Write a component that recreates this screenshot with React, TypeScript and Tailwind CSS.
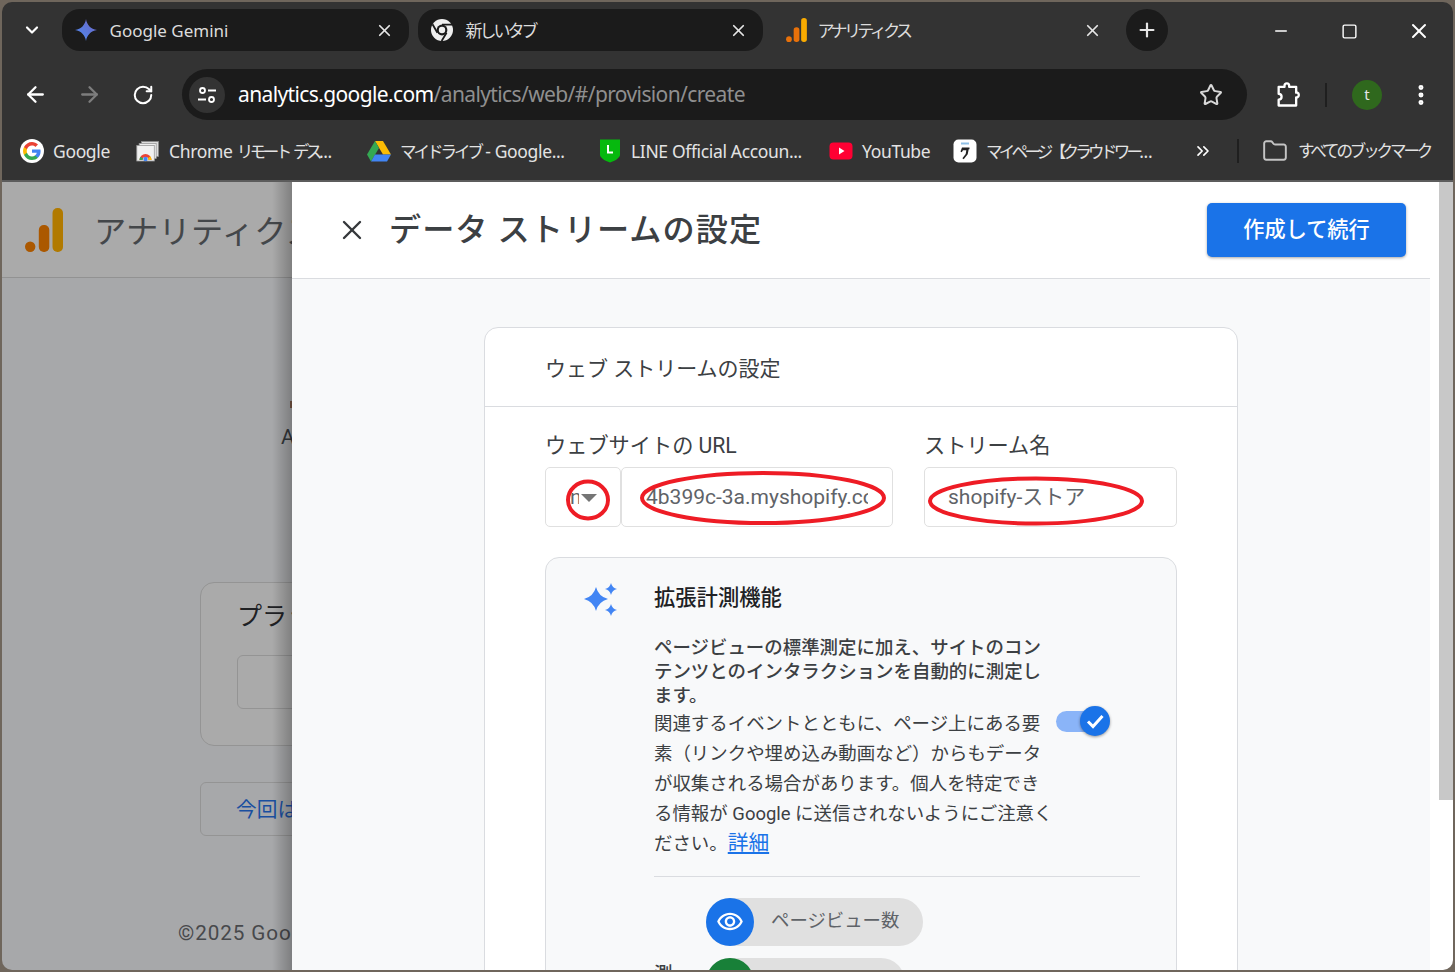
import { FC, ReactNode } from "react";
import {
  ArrowLeft,
  ArrowRight,
  ChevronDown,
  ChevronsRight,
  EllipsisVertical,
  Folder,
  Minus,
  Plus,
  RotateCw,
  Square,
  Star,
  X,
} from "lucide-react";

const chromeFont = "font-['Noto_Sans','Noto_Sans_CJK_JP',sans-serif]";
const pageFont = "font-['Roboto','Noto_Sans_CJK_JP',sans-serif]";

// Japanese runs in the browser UI are set much narrower than Noto's full width.
const Narrow: FC<{ children: ReactNode; className?: string }> = ({
  children,
  className = "text-[16.500px] tracking-[-3px]",
}) => <span className={className}>{children}</span>;

const GeminiIcon = () => (
  <svg viewBox="0 0 24 24" className="w-6 h-6">
    <defs>
      <linearGradient id="gem" x1="0" y1="1" x2="1" y2="0">
        <stop offset="0" stopColor="#4e8df5" />
        <stop offset="0.6" stopColor="#5f74d6" />
        <stop offset="1" stopColor="#7f68c8" />
      </linearGradient>
    </defs>
    <path
      d="M12 1c.9 6 4.8 10 11 11-6.200 1-10.100 5-11 11-.9-6-4.800-10-11-11 6.200-1 10.100-5 11-11z"
      fill="url(#gem)"
    />
  </svg>
);

const ChromeLogo = () => (
  <svg viewBox="0 0 24 24" className="w-6 h-6">
    <circle cx="12" cy="12" r="11" fill="#eeeeee" />
    <path d="M12 6.700h10M7.400 14.700 2.500 6.200M16.600 14.700 11.600 23" stroke="#1b1b1b" strokeWidth="1.800" fill="none" />
    <circle cx="12" cy="12" r="5.400" fill="#1b1b1b" />
    <circle cx="12" cy="12" r="3.200" fill="#eeeeee" />
  </svg>
);

const AnalyticsLogo: FC<{ className: string; a?: string; b?: string; c?: string }> = ({
  className,
  a = "#e8710a",
  b = "#e8710a",
  c = "#f9ab00",
}) => (
  <svg viewBox="0 0 38 44" className={`shrink-0 ${className}`}>
    <rect x="27.500" y="0" width="10.500" height="44" rx="5" fill={c} />
    <rect x="13.800" y="17" width="10.500" height="27" rx="5" fill={b} />
    <circle cx="5.200" cy="38.800" r="5.200" fill={a} />
  </svg>
);

const GoogleG = () => (
  <svg viewBox="0 0 24 24" className="w-6 h-6">
    <circle cx="12" cy="12" r="12" fill="#fff" />
    <path d="M20.600 12.200c0-.6-.1-1.200-.2-1.800H12v3.400h4.800c-.2 1.100-.8 2-1.800 2.700v2.200h2.900c1.700-1.600 2.700-3.800 2.700-6.500z" fill="#4285f4" />
    <path d="M12 21c2.400 0 4.500-.8 5.900-2.200L15 16.500c-.8.500-1.800.9-3 .9-2.300 0-4.300-1.600-5-3.700H4v2.300C5.500 19 8.500 21 12 21z" fill="#34a853" />
    <path d="M7 13.700c-.4-1.100-.4-2.300 0-3.400V8H4c-1.300 2.500-1.300 5.500 0 8l3-2.300z" fill="#fbbc05" />
    <path d="M12 6.600c1.300 0 2.500.5 3.400 1.300L18 5.400C16.400 3.900 14.300 3 12 3 8.500 3 5.500 5 4 8l3 2.300c.7-2.100 2.700-3.700 5-3.700z" fill="#ea4335" />
  </svg>
);

const RemoteDesktopIcon = () => (
  <svg viewBox="0 0 24 24" className="w-6 h-6">
    <rect x="5.500" y="2.500" width="17" height="15" fill="#dddddd" stroke="#8a8a8a" strokeWidth="0.8" />
    <rect x="3.200" y="4.500" width="17" height="15" fill="#eeeeee" stroke="#9a9a9a" strokeWidth="0.8" />
    <rect x="0.800" y="6.500" width="17.500" height="15.500" fill="#f1f1f1" stroke="#9a9a9a" strokeWidth="0.8" />
    <path d="M3.500 21a6 6 0 0 1 12 0h-3a3 3 0 0 0-6 0z" fill="#ea4335" />
    <path d="M3.500 21a6 6 0 0 1 1-3.300l2.600 1.700-.6 1.600z" fill="#34a853" />
    <path d="M15.500 21a6 6 0 0 0-1.300-3.700l-2.200 2 .5 1.700z" fill="#fbbc05" />
    <circle cx="9.500" cy="20" r="2.200" fill="#4285f4" />
  </svg>
);

const DriveIcon = () => (
  <svg viewBox="0 0 24 22" className="w-6 h-6">
    <path d="M8 1h8l8 13.500h-8z" fill="#fbbc05" />
    <path d="M8 1 0 14.500l4 7 8-13.500z" fill="#34a853" />
    <path d="M8 14.500h16l-4 7H4z" fill="#4285f4" />
  </svg>
);

const LineIcon = () => (
  <svg viewBox="0 0 24 24" className="w-6 h-6">
    <path d="M2 0.500h20v15.500c0 2.500-5 6-10 7.500-5-1.500-10-5-10-7.500z" fill="#06b90e" />
    <path d="M10 6v7.500h5" stroke="#fff" strokeWidth="2" fill="none" />
  </svg>
);

const YoutubeIcon = () => (
  <svg viewBox="0 0 24 24" className="w-6 h-6">
    <rect x="0.500" y="3.500" width="23" height="17" rx="4" fill="#ff0033" />
    <path d="M10 8.500 15.500 12 10 15.500z" fill="#fff" />
  </svg>
);

const CrowdWorksIcon = () => (
  <svg viewBox="0 0 24 24" className="w-6 h-6">
    <rect x="0.500" y="0.500" width="23" height="23" rx="5" fill="#fff" />
    <path d="M9 8.500h7.500v1.800h-.8l-1 5-4 5-1.300-1 3.300-4.300.6-3.800H10l-1.200 2-1.300-.8z" fill="#222" />
    <path d="M8 3.500h8v2H8z" fill="#8fc0e6" />
  </svg>
);

const Tab: FC<{ icon: ReactNode; label: ReactNode; width: string; pill?: boolean }> = ({
  icon,
  label,
  width,
  pill,
}) => (
  <div
    className={`flex items-center h-[42px] pl-[12px] pr-[15px] rounded-[18px] ${width} ${
      pill ? "bg-[#1b1b1b]" : ""
    }`}
  >
    <span className="w-6 h-6 flex items-center justify-center">{icon}</span>
    <span className="ml-[11.500px] mt-[1px] text-[17px] text-[#dcdcdc]">{label}</span>
    <X className="ml-auto w-[19px] h-[19px] text-[#e6e6e6]" strokeWidth={2.2} />
  </div>
);

const Bookmark: FC<{ icon: ReactNode; label: ReactNode; width: string }> = ({ icon, label, width }) => (
  <div className={`flex items-center shrink-0 ${width}`}>
    <span className="w-6 h-6 shrink-0">{icon}</span>
    <span className="ml-[9px] text-[17.500px] text-[#e3e3e3] tracking-[-0.35px] whitespace-nowrap">{label}</span>
  </div>
);

const BrowserChrome = () => (
  <header className={`shrink-0 bg-[#333333] h-[180px] border-b-2 border-[#5c5c5c] ${chromeFont}`}>
    {/* tabs */}
    <div className="flex items-center pt-[7px]">
      <div className="w-[60px] flex justify-center">
        <ChevronDown className="w-[20px] h-[20px] text-white" strokeWidth={2.6} />
      </div>
      <div className="flex items-center gap-[9px]">
        <Tab icon={<GeminiIcon />} label="Google Gemini" width="w-[347px]" pill />
        <Tab
          icon={<ChromeLogo />}
          label={<Narrow className="tracking-[-3px]">新しいタブ</Narrow>}
          width="w-[345px]"
          pill
        />
        <Tab
          icon={<AnalyticsLogo className="w-[21px] h-[24px]" />}
          label={<Narrow className="-ml-[2px] tracking-[-3.600px]">アナリティクス</Narrow>}
          width="w-[345px]"
        />
      </div>
      <div className="ml-[9px] w-[42px] h-[42px] rounded-full bg-[#1b1b1b] flex items-center justify-center">
        <Plus className="w-[22px] h-[22px] text-[#e6e6e6]" strokeWidth={2.4} />
      </div>
      <div className="ml-auto mt-[2px] flex items-center">
        <div className="w-[69px] flex justify-center">
          <Minus className="w-[18px] h-[18px] text-white" strokeWidth={2} />
        </div>
        <div className="w-[69px] flex justify-center">
          <Square className="w-[17px] h-[17px] text-white" strokeWidth={2} />
        </div>
        <div className="w-[69px] flex justify-center">
          <X className="w-[24px] h-[24px] text-white" strokeWidth={2} />
        </div>
      </div>
    </div>
    {/* toolbar */}
    <div className="flex items-center mt-[18px] pl-[6px]">
      <div className="w-[54px] flex justify-center">
        <ArrowLeft className="w-[25px] h-[25px] text-white" strokeWidth={2.2} />
      </div>
      <div className="w-[54px] flex justify-center">
        <ArrowRight className="w-[25px] h-[25px] text-[#7d7d7d]" strokeWidth={2.2} />
      </div>
      <div className="w-[54px] flex justify-center">
        <RotateCw className="w-[22px] h-[22px] text-white" strokeWidth={2.2} />
      </div>
      <div className="ml-[12px] w-[1065px] h-[51px] rounded-full bg-[#1b1b1b] flex items-center pl-[7px] pr-[24px]">
        <div className="w-[36px] h-[36px] rounded-full bg-[#333333] flex items-center justify-center">
          <svg viewBox="0 0 24 24" className="w-[24px] h-[24px]" fill="none" stroke="#fff" strokeWidth="1.800">
            <circle cx="7.500" cy="7.500" r="2.500" />
            <path d="M13 7.500h8M3 16.500h8" />
            <circle cx="16.500" cy="16.500" r="2.500" />
          </svg>
        </div>
        <div className="ml-[13px] text-[21px] tracking-[-0.62px] whitespace-nowrap">
          <span className="text-white">analytics.google.com</span>
          <span className="text-[#8f8f8f]">/analytics/web/#/provision/create</span>
        </div>
        <Star className="ml-auto w-[24px] h-[24px] text-[#d8d8d8]" strokeWidth={2} />
      </div>
      <div className="ml-[26px] w-[30px] flex justify-center">
        <svg viewBox="0 0 24 24" className="w-[28px] h-[28px]" fill="none" stroke="#fff" strokeWidth="2" strokeLinejoin="round">
          <path d="M4 5h5V4a2 2 0 0 1 4 0v1h6v5h1a2.200 2.200 0 0 1 0 4h-1v7H4v-5a2.500 2.500 0 0 0 0-5V5z" />
        </svg>
      </div>
      <div className="ml-[22px] w-[2px] h-[24px] bg-[#1f1f1f]" />
      <div className="ml-[25px] w-[30px] h-[30px] rounded-full bg-[#2f681d] flex items-center justify-center text-[15px] text-[#e6e6e6]">
        t
      </div>
      <EllipsisVertical className="ml-[26px] w-[26px] h-[26px] text-white" strokeWidth={2.6} />
    </div>
    {/* bookmarks */}
    <div className="flex items-center mt-[11px] h-[40px] pl-[18px]">
      <Bookmark icon={<GoogleG />} label="Google" width="w-[116px]" />
      <Bookmark
        icon={<RemoteDesktopIcon />}
        label={
          <>
            Chrome <Narrow className="text-[16.500px] tracking-[-3.500px]">リモート</Narrow>{" "}
            <Narrow className="text-[16.500px] tracking-[-3.500px]">デス</Narrow>...
          </>
        }
        width="w-[231px]"
      />
      <Bookmark
        icon={<DriveIcon />}
        label={
          <>
            <Narrow>マイドライブ</Narrow> - Google...
          </>
        }
        width="w-[231px]"
      />
      <Bookmark icon={<LineIcon />} label="LINE Official Accoun..." width="w-[231px]" />
      <Bookmark icon={<YoutubeIcon />} label="YouTube" width="w-[124px]" />
      <Bookmark
        icon={<CrowdWorksIcon />}
        label={
          <>
            <Narrow className="text-[16.500px] tracking-[-3.700px]">マイページ【クラウドワー</Narrow>...
          </>
        }
        width="w-[240px]"
      />
      <ChevronsRight className="w-[20px] h-[20px] text-white shrink-0" strokeWidth={2} />
      <div className="ml-[24px] w-[2px] h-[24px] bg-[#1f1f1f] shrink-0" />
      <Folder className="ml-[23px] w-[26px] h-[26px] text-[#c4c4c4] shrink-0" strokeWidth={1.800} />
      <span className="ml-[10px] text-[#e3e3e3] whitespace-nowrap">
        <Narrow className="text-[16.500px] tracking-[-3.100px]">すべてのブックマーク</Narrow>
      </span>
    </div>
  </header>
);

const BackgroundPage = () => (
  <div className="relative shrink-0 w-[290px] overflow-hidden bg-[#a7a8aa]">
    <div className="h-[96px] bg-[#aaaaaa] border-b border-[#929292] flex items-center pl-[23px] whitespace-nowrap">
      <AnalyticsLogo className="w-[38px] h-[44px]" a="#ab5800" b="#ab5800" c="#b17a00" />
      <span className="ml-[31px] pt-[5px] text-[32.200px] text-[#44474a] tracking-[0.4px]">アナリティクス</span>
    </div>
    <div className="pl-[279px] pt-[147px] text-[20.700px] leading-[24px] text-[#35383c] whitespace-nowrap">
      Account
    </div>
    <div className="ml-[198px] mt-[133px] w-[500px] h-[164px] rounded-[14px] border border-[#949494] bg-[#aaaaaa] pl-[36px] pt-[16px]">
      <div className="text-[25px] leading-[36px] text-[#202124] whitespace-nowrap">プラットフォーム</div>
      <div className="mt-[20px] h-[54px] rounded-[6px] border border-[#949494]" />
    </div>
    <div className="ml-[198px] mt-[36px] w-[500px] h-[54px] rounded-[6px] border border-[#949494] flex items-center pl-[35px] pt-[3px] text-[20.700px] text-[#1a4fa0] whitespace-nowrap">
      今回はスキップ
    </div>
    <div className="ml-[176px] mt-[83px] text-[20.700px] tracking-[0.9px] leading-[28px] text-[#47494c] whitespace-nowrap">
      ©2025 Google
    </div>
    <div className="absolute right-0 top-[219px] w-[2px] h-[7px] bg-[#7a5a48]" />
    <div className="absolute inset-y-0 right-0 w-[20px] bg-gradient-to-r from-transparent to-black/25" />
  </div>
);

const Field: FC<{ children: ReactNode; className: string }> = ({ children, className }) => (
  <div className={`h-[60px] pt-[2px] rounded-[5px] border border-[#e0e0e0] bg-white flex items-center overflow-hidden text-[21px] text-[#5f6368] whitespace-nowrap ${className}`}>
    {children}
  </div>
);

const Chip: FC<{ width: string; bg: string; label: string; icon?: ReactNode }> = ({ width, bg, label, icon }) => (
  <div className={`flex items-center h-[48px] rounded-full bg-[#e0e0e0] ${width}`}>
    <div className={`w-[48px] h-[48px] rounded-full flex items-center justify-center ${bg}`}>{icon}</div>
    <span className="ml-[17px] -mt-[3px] text-[18.400px] text-[#5f6368]">{label}</span>
  </div>
);

const EnhancedMeasurement = () => (
  <div className="relative mx-[60px] mt-[30px] flex rounded-t-[14px] border border-[#dadce0] bg-[#f8f9fa] pl-[36px] pt-[25px] pb-[40px] overflow-hidden">
    <svg viewBox="0 0 36 36" className="w-[36px] h-[36px] shrink-0 text-[#4285f4]" fill="currentColor">
      <path d="M14 4Q16.500 13.500 26 16 16.500 18.500 14 28 11.500 18.500 2 16 11.500 13.500 14 4z" />
      <path d="M29 0Q30.200 4.800 35 6 30.200 7.200 29 12 27.800 7.200 23 6 27.800 4.800 29 0z" />
      <path d="M29 21Q30.200 25.800 35 27 30.200 28.200 29 33 27.800 28.200 23 27 27.800 25.800 29 21z" />
    </svg>
    <div className="ml-[36px] w-[486px]">
      <h3 className="mt-[1px] text-[21.300px] leading-[28px] font-medium text-[#202124]">拡張計測機能</h3>
      <p className="mt-[24px] text-[18.450px] leading-[24px] font-medium text-[#3c4043] whitespace-nowrap">
        ページビューの標準測定に加え、サイトのコン
        <br />
        テンツとのインタラクションを自動的に測定し
        <br />
        ます。
      </p>
      <div className="relative mt-[1px]">
        <p className="text-[18.450px] leading-[30px] text-[#3c4043] whitespace-nowrap">
          関連するイベントとともに、ページ上にある要
          <br />
          素（リンクや埋め込み動画など）からもデータ
          <br />
          が収集される場合があります。個人を特定でき
          <br />
          る情報が Google に送信されないようにご注意く
          <br />
          ださい。
          <span className="text-[20.700px] leading-none text-[#1a73e8] underline">詳細</span>
        </p>
        <div className="absolute left-[402px] top-[2px] w-[44px] h-[21px] rounded-full bg-[#8ab4f8]" />
        <div className="absolute left-[426px] top-[-3px] w-[30px] h-[30px] rounded-full bg-[#1a73e8] shadow-[0_1px_3px_rgba(0,0,0,0.4)] flex items-center justify-center">
          <svg viewBox="0 0 24 24" className="w-[24px] h-[24px]" fill="none" stroke="#fff" strokeWidth="3">
            <path d="M5 12.500 10 17.500 19.500 7" />
          </svg>
        </div>
      </div>
      <div className="mt-[17px] border-t border-[#dadce0]" />
      <div className="mt-[21px] pl-[52px] flex flex-col gap-[12px]">
        <Chip
          width="w-[217px]"
          bg="bg-[#1a73e8]"
          label="ページビュー数"
          icon={
            <svg viewBox="0 0 24 24" className="w-[28px] h-[28px]" fill="#fff">
              <path d="M12 6c3.790 0 7.170 2.130 8.820 5.500C19.170 14.870 15.790 17 12 17s-7.170-2.130-8.820-5.500C4.830 8.130 8.210 6 12 6m0-2C7 4 2.730 7.110 1 11.500 2.730 15.890 7 19 12 19s9.270-3.110 11-7.500C21.270 7.110 17 4 12 4zm0 5c1.380 0 2.500 1.120 2.500 2.500S13.380 14 12 14s-2.500-1.120-2.500-2.500S10.620 9 12 9m0-2c-2.480 0-4.500 2.020-4.500 4.500S9.520 16 12 16s4.500-2.020 4.500-4.500S14.480 7 12 7z" />
            </svg>
          }
        />
        <Chip width="w-[199px]" bg="bg-[#188038]" label="スクロール数" />
      </div>
      <div className="absolute left-[108px] top-[404px] text-[18.450px] leading-[24px] font-medium text-[#3c4043]">測</div>
    </div>
  </div>
);

const StreamCard = () => (
  <div className="mx-[192px] mt-[48px] rounded-t-[14px] border border-[#dadce0] bg-white">
    <div className="h-[79px] border-b border-[#dadce0] flex items-center pl-[60px] pt-[6px] text-[21px] text-[#3c4043]">
      ウェブ ストリームの設定
    </div>
    <div className="px-[60px] pt-[24px] flex gap-[31px]">
      <div>
        <label className="block text-[21.200px] leading-[30px] text-[#3c4043]">ウェブサイトの URL</label>
        <div className="mt-[6px] flex">
          <Field className="w-[76px] pl-[24px]">
            <span className="w-[9px] overflow-hidden">n</span>
            <span className="ml-[2px] w-0 h-0 border-x-[8px] border-t-[8px] border-x-transparent border-t-[#757575]" />
          </Field>
          <Field className="w-[272px] px-[24px]">
            <span className="overflow-hidden">4b399c-3a.myshopify.com</span>
          </Field>
        </div>
      </div>
      <div className="flex-1">
        <label className="block text-[21.200px] leading-[30px] text-[#3c4043]">ストリーム名</label>
        <Field className="mt-[6px] px-[23px]">shopify-ストア</Field>
      </div>
    </div>
    <EnhancedMeasurement />
  </div>
);

const Modal = () => (
  <div className="relative flex-1 flex bg-white overflow-hidden">
    <div className="w-[1138px] shrink-0 bg-[#f8f9fa] overflow-hidden">
      <div className="h-[97px] bg-white border-b border-[#dadce0] flex items-center pl-[44px]">
        <X className="w-[32px] h-[32px] text-[#35383c] shrink-0" strokeWidth={1.800} />
        <h1 className="ml-[21px] text-[32.200px] tracking-[1px] font-medium text-[#3c4043] whitespace-nowrap">データ ストリームの設定</h1>
        <button className="ml-auto mr-[24px] w-[199px] h-[54px] rounded-[5px] bg-[#1a73e8] shadow-[0_1px_3px_rgba(0,0,0,0.35)] text-[21.200px] font-medium text-white">
          作成して続行
        </button>
      </div>
      <StreamCard />
    </div>
    <div className="ml-auto w-[14px] self-start h-[618px] bg-[#c8c8c8]" />
    {/* red marks drawn over the screenshot */}
    <svg className="absolute left-0 top-0 w-[1161px] h-[788px] pointer-events-none" viewBox="0 0 1161 788" fill="none" stroke="#ee1c25" strokeWidth="4">
      <ellipse cx="296" cy="318" rx="20" ry="18.500" />
      <ellipse cx="471" cy="316" rx="121" ry="25" />
      <ellipse cx="744" cy="319" rx="106" ry="22.500" />
    </svg>
  </div>
);

export default function App() {
  return (
    <div className={`w-[1455px] h-[972px] bg-[#6f665c] p-[2px] overflow-hidden ${pageFont}`}>
      <div className="w-[1451px] h-[968px] rounded-[10px] overflow-hidden flex flex-col">
        <BrowserChrome />
        <div className="flex flex-1 min-h-0">
          <BackgroundPage />
          <Modal />
        </div>
      </div>
    </div>
  );
}
